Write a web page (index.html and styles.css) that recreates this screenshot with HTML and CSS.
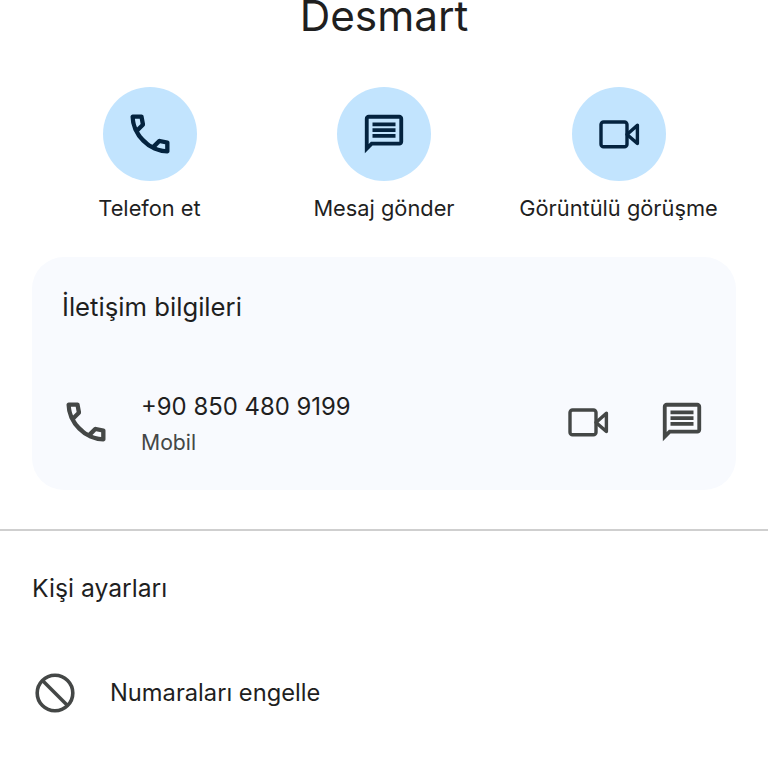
FILE: index.html
```html
<!DOCTYPE html>
<html lang="tr">
<head>
<meta charset="UTF-8">
<title>Desmart</title>
<link rel="stylesheet" href="styles.css">
</head>
<body>
<svg class="sprite" width="0" height="0">
  <symbol id="call" viewBox="0 -960 960 960"><path d="M798-120q-125 0-247-54.5T329-329Q229-429 174.5-551T120-798q0-18 12-30t30-12h162q14 0 25 9.5t13 22.5l26 140q2 16-1 27t-11 19l-97 98q20 37 47.5 71.5T387-386q31 31 65 57.5t72 48.5l94-94q9-9 23.5-13.5T670-390l138 28q14 4 23 14.5t9 23.5v162q0 18-12 30t-30 12ZM241-600l66-66-17-94h-89q5 41 14 81t26 79Zm358 358q39 17 79.5 27t81.5 13v-88l-94-19-67 67Z"/></symbol>
  <symbol id="chat" viewBox="0 0 24 24"><path d="M20 2H4c-1.1 0-2 .9-2 2v18l4-4h14c1.1 0 2-.9 2-2V4c0-1.1-.9-2-2-2zm0 14H5.17L4 17.17V4h16v12zM6 6h12v2H6zM6 9h12v2H6zM6 12h12v2H6z"/></symbol>
  <symbol id="video" viewBox="0 0 24 24"><rect class="line" x="3" y="6" width="13" height="12.4" rx="1.3"/><path class="line" d="M16 12.2l5.2-4.6v9.2z"/></symbol>
</svg>

<h1 class="name">Desmart</h1>

<div class="actions">
  <div class="action">
    <div class="circle"><svg class="ic ic-call"><use href="#call"/></svg></div>
    <span>Telefon et</span>
  </div>
  <div class="action">
    <div class="circle"><svg class="ic ic-chat"><use href="#chat"/></svg></div>
    <span>Mesaj gönder</span>
  </div>
  <div class="action">
    <div class="circle"><svg class="ic ic-video"><use href="#video"/></svg></div>
    <span>Görüntülü görüşme</span>
  </div>
</div>

<div class="card">
  <h2 class="card-title">İletişim bilgileri</h2>
  <div class="contact">
    <svg class="ic ic-call grey"><use href="#call"/></svg>
    <div class="number">
      <div class="phone">+90 850 480 9199</div>
      <div class="type">Mobil</div>
    </div>
    <svg class="ic ic-video grey"><use href="#video"/></svg>
    <svg class="ic ic-chat grey"><use href="#chat"/></svg>
  </div>
</div>

<hr class="divider">

<h2 class="section">Kişi ayarları</h2>
<div class="setting">
  <svg class="ic ic-block" viewBox="0 0 40 40"><circle class="line" cx="20" cy="20" r="17.8"/><path class="line" d="M7.5 7.5l25 25"/></svg>
  <span>Numaraları engelle</span>
</div>
</body>
</html>
```
FILE: styles.css
```css
* {
  margin: 0;
  padding: 0;
  box-sizing: border-box;
}

body {
  width: 768px;
  height: 768px;
  overflow: hidden;
  background: #fff;
  color: #1f1f1f;
  font-family: Inter, Roboto, sans-serif;
}

.sprite {
  position: absolute;
}

.ic {
  display: block;
  flex: none;
  fill: #04233f;
  stroke: #04233f;
}

.ic-call {
  width: 52px;
  height: 52px;
  stroke: none;
}

.ic-chat {
  width: 46px;
  height: 46px;
  stroke: none;
}

.ic-video {
  width: 48px;
  height: 48px;
}

.line {
  fill: none;
  stroke-width: 1.7;
  stroke-linejoin: round;
}

.grey {
  fill: #444746;
  stroke: #444746;
}

.ic-call.grey,
.ic-chat.grey {
  stroke: none;
}

.name {
  height: 34px;
  font-size: 42.3px;
  font-weight: 400;
  line-height: 32px;
  text-align: center;
}

.actions {
  display: flex;
  justify-content: center;
  margin-top: 53px;
}

.action {
  display: flex;
  flex-direction: column;
  align-items: center;
  width: 234.5px;
  font-size: 21.8px;
  line-height: 28px;
  white-space: nowrap;
}

.circle {
  display: flex;
  align-items: center;
  justify-content: center;
  width: 94px;
  height: 94px;
  margin-bottom: 13px;
  border-radius: 50%;
  background: #c2e4fe;
}

.card {
  height: 233px;
  margin: 35px 32px 0;
  padding: 32px 30px 0;
  border-radius: 32px;
  background: #f8fafe;
}

.card-title {
  font-size: 25.7px;
  font-weight: 400;
  line-height: 36px;
}

.contact {
  display: flex;
  align-items: center;
  margin-top: 63px;
}

.contact .ic-call {
  margin-left: -2px;
}

.number {
  flex: 1;
  margin-left: 29px;
  padding-top: 3px;
}

.phone {
  font-size: 23.9px;
  line-height: 32px;
}

.type {
  margin-top: 5px;
  color: #444746;
  font-size: 21.2px;
  line-height: 28px;
}

.contact .ic-chat {
  margin-left: 47px;
  margin-right: 1px;
}

.divider {
  height: 2px;
  margin-top: 39px;
  border: 0;
  background: #cfcfcf;
}

.section {
  margin: 39px 32px 0;
  font-size: 24.7px;
  font-weight: 400;
  line-height: 36px;
}

.setting {
  display: flex;
  align-items: center;
  gap: 35px;
  margin: 67px 0 0 35px;
  font-size: 23.7px;
  line-height: 40px;
}

.ic-block {
  width: 40px;
  height: 40px;
  stroke: #444746;
}

.ic-block .line {
  stroke-width: 3.6;
}
```
